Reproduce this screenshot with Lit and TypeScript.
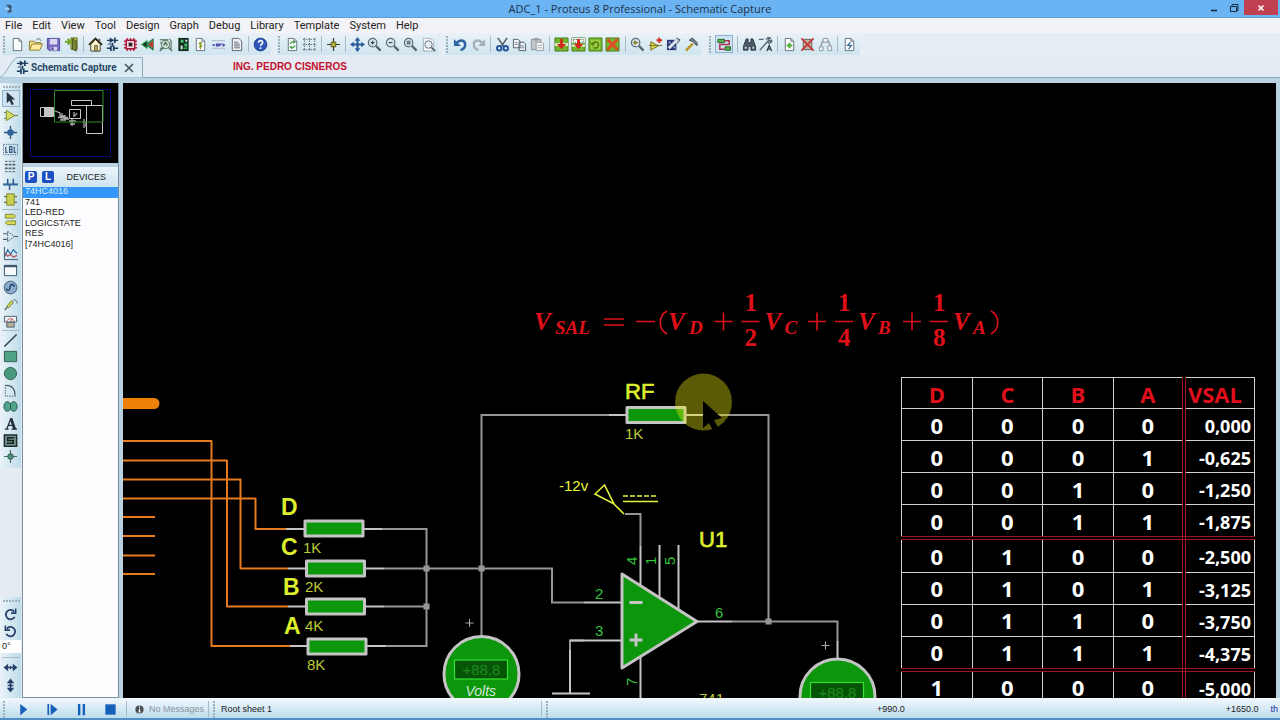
import { LitElement, html, svg, css, nothing } from "lit";
import { customElement } from "lit/decorators.js";

const page = svg`<path d="M3.5 1.5h6l3 3v10h-9z" fill="#fbfcfd" stroke="#66717c"/><path d="M9.5 1.5v3h3" fill="none" stroke="#66717c"/>`;
const lens = svg`<path d="M9.5 9.5l5 5" stroke="#59646e" stroke-width="2.4"/><circle cx="6" cy="6" r="4.5" fill="#dbe7ef" stroke="#5b6b78" stroke-width="1.3"/>`;
const caps = svg`<path d="M2 3.500h4M9 3.500h5M2 12h4M9 12h5M8 6v4" stroke="#1d3f60" stroke-width="1.400"/><path d="M5 .5v6l5-3z" fill="#1d3f60"/><path d="M10.500 .5v6M6.300 9v6M9.300 9v6" stroke="#1d3f60" stroke-width="1.800"/><path d="M3 7.500h6" stroke="#1d3f60"/>`;
const tile = svg`<path d="M1 1h14v14H1z" fill="#72b52c" stroke="#4d7d22"/>`;

const icons: Record<string, unknown> = {
  new: page,
  open: svg`<path d="M1.500 14V4.500h5l1 1.500h6v2" fill="#f2df8c" stroke="#8b7a2c"/><path d="M1.500 14l3-6.500h11l-3 6.500z" fill="#ffec9e" stroke="#8b7a2c"/><path d="M9 3c2-2 4-1 5 1" fill="none" stroke="#555"/>`,
  save: svg`<path d="M1.500 1.500h13v13h-11l-2-2z" fill="#7767c4" stroke="#5145a0"/><path d="M4 2h8v6H4z" fill="#d8d8f0"/><path d="M5 10.500h7v4H5z" fill="#cfd2e2"/><path d="M6 11h2v3H6z" fill="#40379a"/>`,
  exit: svg`<path d="M7.500 1h6.500v12H7.500z" fill="#cfd84d" stroke="#59601d"/><path d="M9 2l4 2v11l-4-2z" fill="#7b8838" stroke="#474d1a"/><path d="M1 5h6M4 2l3 3-3 3" fill="none" stroke="#6fa822" stroke-width="2.200"/>`,
  home: svg`<path d="M3 8v7h10V8L8 2.500z" fill="#fff6cf" stroke="#3c3a22"/><path d="M1 8.500L8 1.500l7 7" fill="none" stroke="#2e2a12" stroke-width="1.800"/><path d="M7 9h3v6H7z" fill="#c9b440" stroke="#555"/><path d="M12 2v3" stroke="#555" stroke-width="2"/>`,
  caps,
  chip: svg`<path d="M4.500 1v14M8 1v14M11.500 1v14M1 4.500h14M1 8h14M1 11.500h14" stroke="#c02040" stroke-width="1.500"/><path d="M3.500 3.500h9v9h-9z" fill="#f3d7dc" stroke="#a31234" stroke-width="1.500"/><path d="M6 6h4v4H6z" fill="#39202a"/>`,
  view3d: svg`<path d="M8 3v10L1 8z" fill="#2b9a4e"/><path d="M14 2v12L6 8z" fill="#2f9a58" stroke="#1c6b3a"/><path d="M14 4v8L9 8z" fill="#c8372e"/><path d="M3 8l4-3v6z" fill="#14301f"/>`,
  gerber: svg`<path d="M2 3h9M2 6h5M2 12h5M12 2l2 2v9" fill="none" stroke="#6f8b7a" stroke-width="1.500"/><circle cx="8" cy="8" r="4.500" fill="#c8dcd0" stroke="#54705f"/><path d="M6 9l2-3 2 3M11 11l4 4M2 15l4-4" fill="none" stroke="#54705f" stroke-width="1.600"/>`,
  design: svg`<path d="M2.500 1h11v14h-11z" fill="#152b1d"/><path d="M5 3h3v3H5zM9 7h3v3H9z" fill="#39c46d"/><path d="M5 9h2v4H5zM10 3h2v2h-2z" fill="#d8f4e0"/><path d="M8 11h4v2H8z" fill="#2a9c53"/>`,
  bom: svg`${page}<path d="M10 6.500c-3-1.500-4.500 1-2 1.800s2 3-1.800 2M8 5v8" fill="none" stroke="#8b9b2b" stroke-width="1.200"/>`,
  source: svg`<path d="M1 4h14M1 12h14" stroke="#a9b0c6" /><path d="M1.500 8.500h3M6 7.500v2h2v-2zM9.500 9.500v-2h2M13 7v3M12.500 8.500h2.500" fill="none" stroke="#4d44b0" stroke-width="1.400"/>`,
  notes: svg`<path d="M3.500 1.500h7l3 3v10h-10z" fill="#eef0f3" stroke="#58636e"/><path d="M5.500 5.500h4M5.500 7.500h6M5.500 9.500h6M5.500 11.500h6" stroke="#5d6872"/>`,
  help: svg`<circle cx="8" cy="8" r="6.800" fill="#2f55b8" stroke="#1e3d8e"/><path d="M5.800 6.200C5.800 3 10.500 3.300 10.300 6 10.200 7.500 8 7.700 8 9.500M8 11v1.700" fill="none" stroke="#fff" stroke-width="1.700"/>`,
  redraw: svg`${page}<path d="M5.500 7.500A2.800 2.800 0 0 1 10 6M10.500 9A2.800 2.800 0 0 1 6 10.800" fill="none" stroke="#44a344" stroke-width="1.500"/><path d="M9 3.500l2.500 2.500-3 1zM7 13l-2.500-2.500 3-1z" fill="#44a344"/>`,
  grid: svg`<path d="M2.500 1v14M8 1v14M13.500 1v14M1 2.500h14M1 8h14M1 13.500h14" stroke="#4f5b68" stroke-dasharray="1.500 1.200"/>`,
  origin: svg`<path d="M8 1v14M1 8h14" stroke="#3b3b26" stroke-width="1.300"/><path d="M5.500 5.500h5v5h-5z" fill="#b8b23c" stroke="#5d5a20"/>`,
  pan: svg`<path d="M8 2v12M2 8h12" stroke="#2a5b9b" stroke-width="2.200"/><path d="M8 0l3 4H5zM8 16l3-4H5zM0 8l4-3v6zM16 8l-4-3v6z" fill="#2a5b9b"/>`,
  zin: svg`${lens}<path d="M4 6h4M6 4v4" stroke="#33414d" stroke-width="1.200"/>`,
  zout: svg`${lens}<path d="M4 6h4" stroke="#33414d" stroke-width="1.200"/>`,
  zall: svg`${lens}<path d="M4.500 4.500h3v3h-3z" fill="#8895a0" stroke="#51606c"/>`,
  zarea: svg`<path d="M2.500 15V1.500h8l3 3V15z" fill="#f4f6f8" stroke="#7b8792" stroke-dasharray="1.500 1"/><circle cx="8" cy="8" r="4" fill="#e4ecf1" stroke="#66737e"/><path d="M11 11l4 4" stroke="#59646e" stroke-width="2"/>`,
  undo: svg`<path d="M4 6c5-4 9-2 9 2 0 3-2 5-5 6" fill="none" stroke="#2f62a3" stroke-width="2.600"/><path d="M1 2v7.500h7.500z" fill="#2f62a3"/>`,
  redo: svg`<path d="M12 6C7 2 3 4 3 8c0 3 2 5 5 6" fill="none" stroke="#a7b0b8" stroke-width="2.600"/><path d="M15 2v7.500H7.500z" fill="#a7b0b8"/>`,
  cut: svg`<path d="M3 1l7 10M13 1L6 11" stroke="#4c5a66" stroke-width="1.600"/><circle cx="4.500" cy="12" r="2.400" fill="none" stroke="#24549b" stroke-width="2"/><circle cx="11.500" cy="12" r="2.400" fill="none" stroke="#24549b" stroke-width="2"/>`,
  copy: svg`<path d="M1.500 2.500h5l2 2v7h-7zM7.500 5.500h5l2 2v7h-7z" fill="#f1f3f6" stroke="#4f5a66"/><path d="M3 6h3M3 8h3M9 9.500h4M9 11.500h4" stroke="#76828d"/>`,
  paste: svg`<path d="M1.500 2.500h10v11h-10z" fill="#c3c8cc" stroke="#8b9298"/><path d="M4.500 1h4v3h-4z" fill="#969da3"/><path d="M6.500 5.500h6l2 2v7h-8z" fill="#f0f2f4" stroke="#949ba2"/><path d="M8 9h5M8 11.500h5" stroke="#aab0b6"/>`,
  bcopy: svg`${tile}<path d="M1 6.500h14v3H1z" fill="#dff0d2"/><path d="M6.500 2h3v5.500h3.500L8 13 3 7.500h3.500z" fill="#d42a1d"/>`,
  bmove: svg`${tile}<path d="M1 1h14v5.500H1zM1 8h14v2H1z" fill="#eef5ea"/><path d="M2.500 2.500h11v3.500h-11z" fill="none" stroke="#66717c" stroke-dasharray="1.500 1"/><path d="M6.500 2h3v5.500h3.500L8 13 3 7.500h3.500z" fill="#d42a1d"/>`,
  brot: svg`${tile}<path d="M3 3h10v10H3z" fill="#97cf3d"/><path d="M5 7.500A3.200 3.200 0 1 1 6 11" fill="none" stroke="#577b18" stroke-width="1.700"/><path d="M2.500 6h5L5 10z" fill="#577b18"/>`,
  bdel: svg`${tile}<path d="M2.500 2.500l11 11M13.500 2.500l-11 11" stroke="#df4a28" stroke-width="3"/>`,
  pick: svg`${lens}<path d="M3 6h2M7 6h2M5 4v4l2.500-2z" fill="#b9bd3c" stroke="#6e7020"/>`,
  make: svg`<path d="M1 9h14M3 5v9l8-4.500z" fill="#ddd84b" stroke="#736f1e"/><path d="M12 .5v6M9 3.500h6" stroke="#d6301f" stroke-width="2"/>`,
  pack: svg`<path d="M1 3h10v11H1z" fill="#2d3c77"/><path d="M3 12l9-9" stroke="#dfe5ef" stroke-width="3"/><path d="M3 5l2 2M8 10l2 2" stroke="#8fa0cf" stroke-width="1.600"/><path d="M11 1l4 2-3 4" fill="#b9c2cc" stroke="#48505c"/>`,
  hammer: svg`<path d="M2 14.500L9.500 7" stroke="#b89428" stroke-width="2.600"/><path d="M5.500 3.500L9 1l5 5v3l-2-1-2-3z" fill="#77828f" stroke="#414b57"/>`,
  wire: svg`<path d="M1 2.500h7v3.500H1zM8.500 10.500h6v3.500h-6z" fill="#55b154" stroke="#236127"/><path d="M8 4h5v4H3v5h5" fill="none" stroke="#a8334c" stroke-width="1.600"/>`,
  find: svg`<path d="M4.500 2h2v4h3V2h2l3 8v4h-5v-4h-3v4h-5v-4z" fill="#4d5a67" stroke="#2f3a46"/><path d="M3 10.500h2v2H3zM11 10.500h2v2h-2z" fill="#c6d0d8"/>`,
  prop: svg`<path d="M1 2.500h5M2 14l9-10M9 3c0-2 3-3 4-2l-2 2 1 1.500 2.500-1C15 6 12 7 10.500 6" fill="none" stroke="#596572" stroke-width="1.500"/><path d="M9.500 15l2.500-6 2.500 6M10.500 13h3" fill="none" stroke="#2e3944" stroke-width="1.300"/>`,
  addsheet: svg`${page}<path d="M8 6v6M5 9h6" stroke="#4fae32" stroke-width="2"/>`,
  delsheet: svg`<path d="M3.500 2.500h9v11h-9z" fill="#bfae9f" stroke="#665e58"/><path d="M1.500 1.500l13 13M14.500 1.500l-13 13" stroke="#c73433" stroke-width="1.700"/>`,
  tree: svg`<path d="M5.500 1.500h5v4h-5zM1.500 10.500h4v4h-4zM10.500 9.500h4v5h-4z" fill="#eef1f4" stroke="#8d969f"/><path d="M5 4L3 10M11 4l2 5" stroke="#8d969f" stroke-width="1.400"/>`,
  erc: svg`${page}<path d="M9 5.500L6 9h4l-3 4" fill="none" stroke="#34658e" stroke-width="1.300"/>`,

  select: svg`<path d="M4 1v12l3-3 2 5 2.500-1-2.300-5H13z" fill="#26323f"/>`,
  comp: svg`<path d="M1 5h3M1 11h3M12 8h4" stroke="#66702a"/><path d="M3.500 2.500v11l9-5.500z" fill="#d4dc62" stroke="#7c8735"/>`,
  junction: svg`<path d="M8 1v14M1 8h14" stroke="#33547a" stroke-width="1.400"/><circle cx="8" cy="8" r="3.500" fill="#2f63a0"/>`,
  label: svg`<path d="M.5 2.500h15v11H.5z" fill="none" stroke="#4f6b8f" stroke-dasharray="1.500 1"/><path d="M3 5v6h2M7 5v6h2.500V5zM7 8h2M12 5v6h2" fill="none" stroke="#3c5b86" stroke-width="1.300"/>`,
  script: svg`<path d="M2 2.500h12M2 13.500h12" stroke="#55636f" stroke-dasharray="3 1"/><path d="M2 6h12M2 10h12" stroke="#55636f" stroke-width="2" stroke-dasharray="3 1"/>`,
  bus: svg`<path d="M0 9h16" stroke="#2e6aa8" stroke-width="2.200"/><path d="M5 3v6M11 3v6M7 9v6" stroke="#2e5986" stroke-width="1.600"/>`,
  sub: svg`<path d="M1 5h14M1 11h14" stroke="#6b7340" stroke-width="1.300"/><path d="M4 2h8v12H4z" fill="#c9d051" stroke="#7b8331"/>`,
  term: svg`<path d="M2.500 2.500h9l2 2-2 2h-9zM4.500 9.500h9v4h-9l-2-2z" fill="#d6da55" stroke="#7c8334"/>`,
  pin: svg`<path d="M0 5h5M0 11h5M12 8h4" stroke="#51606f" stroke-width="1.200"/><path d="M5 2.500v11l7-5.500z" fill="none" stroke="#51606f" stroke-dasharray="2 1"/>`,
  graph: svg`<path d="M1.500 1v13.500H16" fill="none" stroke="#33526f"/><path d="M2 11l3-7 3 5 3-5 4 4" fill="none" stroke="#2e73a5" stroke-width="1.300"/><path d="M2 7l3 4 3-2 3 3 4-2" fill="none" stroke="#b94e55" stroke-width="1.200"/>`,
  popup: svg`<path d="M1.500 2.500h13v11h-13z" fill="#f4f9fc" stroke="#35506c"/><path d="M1 3.500h14" stroke="#35506c" stroke-width="2"/>`,
  gen: svg`<circle cx="8" cy="8" r="6.800" fill="#8ba9c9" stroke="#42607f"/><path d="M3.500 9c1 3 3.500 3 4-1s3-4 5-1" fill="none" stroke="#20416b" stroke-width="1.500"/>`,
  probe: svg`<path d="M2 14l3-4" stroke="#4f5a5a" stroke-width="1.300"/><path d="M4 10l5-6 2 2-5 5.500z" fill="#d8de5a" stroke="#6f7733"/><path d="M10 5c3-5 5 0 5 2" fill="none" stroke="#61705a"/>`,
  meter: svg`<path d="M1.500 2.500h13v6h-13z" fill="#eef3f6" stroke="#47596a"/><path d="M4 8c1-4 7-4 8 0M8 8l2-3" fill="none" stroke="#b04b4b"/><path d="M4 9h8v5H4z" fill="#aeb193" stroke="#566370"/>`,
  line: svg`<path d="M1.500 14.500l13-13" stroke="#33404d" stroke-width="1.600"/>`,
  box: svg`<path d="M1.500 2.500h13v11h-13z" fill="#4fa388" stroke="#2e5b50"/>`,
  circle: svg`<circle cx="8" cy="8" r="6.500" fill="#4a9a80" stroke="#2e5b50"/>`,
  arc: svg`<path d="M2.500 2v12h11" fill="none" stroke="#3f5962" stroke-dasharray="1.500 1.200"/><path d="M3 2.500c7 0 10 4 10 11" fill="none" stroke="#3f5962" stroke-width="1.200"/>`,
  path: svg`<path d="M8 5C5 1 1 3 1 8s4 7 7 3c3 4 7 2 7-3s-4-7-7-3z" fill="#4fa388" stroke="#26574b"/><path d="M8 5v6" stroke="#26574b"/>`,
  text: svg`<path d="M2 14h4M9 14h6M4 14L8.500 2.500M5.500 10h5" stroke="#222d38" stroke-width="1.400"/><path d="M8.500 2.500l4 11.500" stroke="#222d38" stroke-width="3"/>`,
  symbol: svg`<path d="M1.500 2h13v12h-13z" fill="#76968f" stroke="#1f2c2e" stroke-width="1.600"/><path d="M12 5H5v3h6v3H4" fill="none" stroke="#15201f" stroke-width="1.700"/>`,
  marker: svg`<path d="M8 1v14M1 8h14" stroke="#45706a" stroke-width="1.200"/><circle cx="8" cy="8" r="3" fill="#4d8f7e" stroke="#31564e"/>`,
  cw: svg`<path d="M12.500 10.500A5 5 0 1 1 12 5" fill="none" stroke="#28416a" stroke-width="1.900"/><path d="M13.500 1.500v5h-5" fill="none" stroke="#28416a" stroke-width="1.700"/>`,
  ccw: svg`<path d="M3.500 10.500A5 5 0 1 0 4 5" fill="none" stroke="#28416a" stroke-width="1.900"/><path d="M2.500 1.500v5h5" fill="none" stroke="#28416a" stroke-width="1.700"/>`,
  fliph: svg`<path d="M3 8h10" stroke="#28416a" stroke-width="1.700"/><path d="M.5 8l5-4v8zM15.500 8l-5-4v8z" fill="#28416a"/><path d="M8 6v4" stroke="#28416a"/>`,
  flipv: svg`<path d="M8 3v10M5 8h6" stroke="#28416a" stroke-width="1.700"/><path d="M8 .5l4 5H4zM8 15.500l4-5H4z" fill="#28416a"/>`,
  play: svg`<path d="M4.500 2v12l7.500-6z" fill="#1560b8"/>`,
  step: svg`<path d="M3.500 2v12" stroke="#1560b8" stroke-width="1.800"/><path d="M6 2v12l7.500-6z" fill="#1560b8"/>`,
  pause: svg`<path d="M5.500 2v12M10.500 2v12" stroke="#1560b8" stroke-width="2.600"/>`,
  stop: svg`<path d="M2.500 2.500h11v11h-11z" fill="#1560b8"/>`,
  info: svg`<circle cx="8" cy="8" r="6" fill="#4b4f53"/><path d="M8 7v4.500M6.500 11.500h3M8 3.800v1.800" stroke="#fff" stroke-width="1.700"/>`,
};

const glyph = (name: string) =>
  html`<svg class="ic" viewBox="0 0 16 16" aria-hidden="true">${icons[name]}</svg>`;

const tool = (name: string, on = false) =>
  html`<button class="tool ${on ? "on" : ""}" aria-label=${name}>${glyph(name)}</button>`;

type Group = { names: string[]; size: number };

const topBars: Group[][] = [
  [
    { names: ["new", "open", "save", "exit"], size: 70 },
    { names: ["home", "caps", "chip", "view3d", "gerber", "design", "bom", "source", "notes"], size: 157 },
    { names: ["help"], size: 16 },
  ],
  [
    { names: ["redraw", "grid"], size: 33 },
    { names: ["origin"], size: 16 },
    { names: ["pan", "zin", "zout", "zall", "zarea"], size: 87 },
  ],
  [
    { names: ["undo", "redo"], size: 34 },
    { names: ["cut", "copy", "paste"], size: 51 },
    { names: ["bcopy", "bmove", "brot", "bdel"], size: 68 },
    { names: ["pick", "make", "pack", "hammer"], size: 70 },
  ],
  [
    { names: ["wire"], size: 18 },
    { names: ["find", "prop"], size: 32 },
    { names: ["addsheet", "delsheet", "tree"], size: 52 },
    { names: ["erc"], size: 16 },
  ],
];

const sideGroups: Group[] = [
  { names: ["select", "comp", "junction", "label", "script", "bus", "sub"], size: 118 },
  { names: ["term", "pin", "graph", "popup", "gen", "probe", "meter"], size: 118 },
  { names: ["line", "box", "circle", "arc", "path", "text", "symbol", "marker"], size: 133 },
];

const menus = ["File", "Edit", "View", "Tool", "Design", "Graph", "Debug", "Library", "Template", "System", "Help"];
const devices = ["74HC4016", "741", "LED-RED", "LOGICSTATE", "RES", "[74HC4016]"];
const outputs = ["0,000", "-0,625", "-1,250", "-1,875", "-2,500", "-3,125", "-3,750", "-4,375", "-5,000"];

@customElement("schematic-canvas")
class SchematicCanvas extends LitElement {
  static styles = css`
    :host { display: block; position: relative; overflow: hidden; background: #000; }
    .sheet { display: block; position: absolute; inset: 0; width: 100%; height: 100%; font-family: "Liberation Sans", sans-serif; }
    .wire { fill: none; stroke: #969696; stroke-width: 2; }
    .lead { fill: none; stroke: #c4c4c4; stroke-width: 2; }
    .bus { fill: none; stroke: #e67a1c; stroke-width: 2; stroke-linejoin: round; }
    .body { fill: #0b960b; stroke: #c4c4c4; stroke-width: 3; stroke-linejoin: round; }
    .dot { fill: #969696; }
    .ref { fill: #dcee2c; font-size: 22px; stroke: #dcee2c; stroke-width: 0.7px; }
    .name { fill: #dcee2c; font-size: 23px; font-weight: 700; }
    .val { fill: #bccb36; font-size: 15px; }
    .net { fill: #e6f53c; font-size: 15px; }
    .pin { fill: #33c33c; font-size: 15px; }
    .yl { fill: none; stroke: #e6f53c; stroke-width: 1.6; }
    .plus { stroke: #aaa; stroke-width: 1; }
    .lcd { fill: #065506; stroke: #35e035; stroke-width: 1.2; }
    .seg { fill: #1f8c1f; font-size: 15px; }
    .unit { fill: #d5e6d5; font-size: 14px; font-style: italic; }
    .math { fill: #e0101a; font-family: "Liberation Serif", serif; font-size: 25px; font-weight: 700; }
    .v { font-style: italic; }
    .sub { font-style: italic; font-size: 19px; }
    .op { fill: none; stroke: #e0101a; stroke-width: 1.6; }
    .truth { position: absolute; left: 778px; top: 294px; width: 354px; height: 327px; border-collapse: collapse; table-layout: fixed; font: 700 22px/26px "Open Sans", "Noto Sans", sans-serif; color: #fff; }
    .truth th, .truth td { padding: 0; border: 1px solid #d0d0d0; text-align: center; font-weight: 700; }
    .truth th { height: 31px; padding-top: 2px; box-sizing: border-box; color: #e00f1c; }
    .truth .in { border-right: 4px double #a01420; }
    .truth .split td { border-bottom: 4px double #a01420; }
    .truth .out { font-size: 18px; text-align: right; padding: 3px 3px 0 0; }
    .truth .vs { text-align: left; padding-left: 2px; }
  `;

  private resistor(x: number, y: number) {
    return svg`<rect class="body" x=${x} y=${y - 7} width="58" height="15"/>`;
  }

  private meter(x: number, y: number) {
    return svg`<circle class="body" cx=${x} cy=${y} r="37.500"/>
      <rect class="lcd" x=${x - 27} y=${y - 14} width="53" height="19"/>
      <text class="seg" x=${x - 19} y=${y + 1}>+88.8</text>
      <text class="unit" x=${x - 16} y=${y + 22}>Volts</text>
      <path class="plus" d="M${x - 16} ${y - 51}h8M${x - 12} ${y - 55}v8"/>`;
  }

  private term(x: number, den: string, letter: string) {
    return svg`<path class="op" d="M${x - 27} 321.500h18M${x - 18} 312.500v18M${x} 321.500h18"/>
      <text x=${x + 3} y="311">1</text><text x=${x + 3} y="346">${den}</text>
      <text class="v" x=${x + 23} y="330">V</text><text class="sub" x=${x + 43} y="334">${letter}</text>`;
  }

  render() {
    return html`
      <svg class="sheet" role="img" aria-label="Schematic">
        <g transform="translate(-123 -83)">
          <path d="M120 403.500h34" stroke="#f0800a" stroke-width="11" stroke-linecap="round"/>
          <path class="bus" d="M123 441h88.500v205H290M123 460.500h104V606.500H288M123 479.500h117.500V568.500H288M123 498.500h132.500V529H286M123 517h32M123 536h32M123 555.500h32M123 574h32"/>
          <path class="lead" d="M286 529h96M288 568.500h96M288 606.500h96M290 646h96M609 415h95"/>
          <path class="wire" d="M382 529h44.500v117H386M384 568.500H552v34h32M384 606.500H426.500M481.500 568.500V415H609M704 415h64.500v206.500M732 621.500h105.500v20M625 514h15.500v32"/>
          <path class="wire" d="M481.500 568.500V637M570 693v-52.500h14"/>
          <path class="lead" d="M584 602.500h38M570 640.500h52M552 693.500h38M640.500 546v40M659.500 545v55M678.500 545v65M696 621.500h36M640.500 655v45M837.500 641v18M570 650v43"/>
          ${this.resistor(305, 528)}${this.resistor(306.5, 568)}${this.resistor(306.5, 606)}${this.resistor(308, 646)}${this.resistor(627, 414.5)}
          <path class="dot" d="M423.500 565.500h6v6h-6zM423.500 603.500h6v6h-6zM478.500 565.500h6v6h-6zM765.500 618.500h6v6h-6z"/>
          <path class="body" d="M622 574v94l75-46.500z"/>
          <path d="M629.500 602.500h13M629.500 640h13M636 633.500v13" stroke="#c4c4c4" stroke-width="3"/>
          ${this.meter(481.5, 674)}${this.meter(837.5, 696.5)}
          <text class="name" x="281" y="515">D</text><text class="name" x="281" y="555">C</text>
          <text class="name" x="283" y="595">B</text><text class="name" x="284" y="634">A</text>
          <text class="val" x="303" y="553">1K</text><text class="val" x="305" y="592">2K</text>
          <text class="val" x="305" y="631">4K</text><text class="val" x="307" y="670">8K</text>
          <text class="ref" x="625" y="399">RF</text><text class="val" x="625" y="439">1K</text>
          <text class="ref" x="699" y="547">U1</text><text class="val" x="699" y="704">741</text>
          <text class="net" x="559" y="491">-12v</text>
          <path class="yl" d="M595 494l9.500-9 9.500 19zM614 504l10 10M623 501.500h35"/>
          <path class="yl" d="M623 496h35" stroke-dasharray="5 2"/>
          <text class="pin" x="595" y="599">2</text><text class="pin" x="595" y="636">3</text><text class="pin" x="715" y="618">6</text>
          <text class="pin" transform="translate(637 565) rotate(-90)">4</text>
          <text class="pin" transform="translate(656 565) rotate(-90)">1</text>
          <text class="pin" transform="translate(675 565) rotate(-90)">5</text>
          <text class="pin" transform="translate(637 686) rotate(-90)">7</text>
          <g class="math">
            <text class="v" x="534" y="330">V</text><text class="sub" x="555" y="334">SAL</text>
            <path class="op" d="M604 319h20M604 325h20M636 321.500h19"/>
            <path class="op" d="M667 311c-9 5-9 18 0 23M991 311c9 5 9 18 0 23"/>
            <text class="v" x="668" y="330">V</text><text class="sub" x="689" y="334">D</text>
            ${this.term(741.5, "2", "C")}${this.term(835, "4", "B")}${this.term(930, "8", "A")}
          </g>
          <circle cx="703.500" cy="402" r="28.500" fill="#ecec12" fill-opacity="0.38"/>
          <path d="M703 401v27l6-5 4 8 6-2-5-9 8-2z" fill="#000"/>
        </g>
      </svg>
      <table class="truth">
        <thead><tr><th>D</th><th>C</th><th>B</th><th class="in">A</th><th class="vs">VSAL</th></tr></thead>
        <tbody>
          ${outputs.map((out, n) => html`<tr class=${n % 4 === 3 ? "split" : ""}>
            ${[3, 2, 1, 0].map((bit) => html`<td class=${bit === 0 ? "in" : ""}>${(n >> bit) & 1}</td>`)}
            <td class="out">${out}</td>
          </tr>`)}
        </tbody>
      </table>`;
  }
}

@customElement("app-root")
class AppRoot extends LitElement {
  static styles = css`
    :host { display: flex; flex-direction: column; height: 100vh; min-height: 480px; overflow: hidden; background: #e7edf4; color: #222; font: 11px/14px "Open Sans", "Noto Sans", sans-serif; }
    * { box-sizing: border-box; }
    button, input { font: inherit; color: inherit; border: 0; margin: 0; padding: 0; background: none; }
    .title { display: grid; grid-template-columns: 1fr auto 1fr; height: 18px; background: #6bb4f3; border-bottom: 1px solid #5b9fd8; }
    .title h1 { margin: 0; font-size: 11px; line-height: 18px; font-weight: 400; color: #1d3247; }
    .logo { width: 10px; height: 10px; margin: 4px 0 0 4px; }
    .win { display: flex; justify-content: flex-end; height: 15px; padding-right: 2px; }
    .win button { width: 20px; height: 15px; display: grid; place-items: center; }
    .win .close { width: 34px; height: 15px; background: #bf4150; }
    .win svg { width: 10px; height: 10px; }
    .menu { display: flex; height: 15px; padding: 1px 0 0 5px; gap: 10px; background: #f3f3f7; font-family: Roboto, "Open Sans", sans-serif; }
    .bars { display: flex; gap: 6px; height: 22px; padding: 0 2px; }
    .bar { display: flex; align-items: center; padding-right: 3px; background: linear-gradient(#e9f2f8, #cfe5ef); }
    .grip { width: 7px; height: 18px; background: radial-gradient(circle at 2px 2px, #9fb0bd 1px, transparent 1px) 0 0 / 7px 3px; }
    .group { display: flex; justify-content: space-between; }
    .sep { width: 8px; height: 16px; background: linear-gradient(#a9bbc7, #a9bbc7) center / 1px 100% no-repeat; }
    .tool { display: grid; place-items: center; width: 16px; height: 16px; }
    .tool.on { width: 18px; height: 18px; background: #cfe3f2; outline: 1px solid #8fb2cf; outline-offset: -1px; }
    .ic { display: block; width: 15px; height: 15px; }
    .tabs { display: flex; align-items: flex-end; height: 23px; border-bottom: 1px solid #8aabbe; background: #e5ebf2; }
    .tab { position: relative; display: flex; align-items: center; width: 143px; height: 21px; padding-left: 15px; gap: 1px; font: 700 10px/14px Roboto, "Liberation Sans", sans-serif; color: #2b4765; margin-bottom: -1px; }
    .shape { position: absolute; inset: 0; width: 100%; height: 100%; }
    .tab .ic, .tab span, .tab button { position: relative; }
    .tab button { width: 12px; height: 12px; margin: 0 8px 0 auto; }
    .tab button svg { display: block; width: 12px; height: 12px; }
    .author { margin-left: 90px; font: 700 10px/20px "Liberation Sans", sans-serif; color: #c3102c; }
    .main { flex: 1; min-height: 0; display: grid; grid-template-columns: 22px 97px 1fr; padding: 5px 4px 0 0; background: #b9d3e2; }
    .side { display: flex; flex-direction: column; justify-content: space-between; background: #e4ebf3; }
    .vbar { display: flex; flex-direction: column; align-items: center; width: 21px; padding: 2px 0 3px; background: linear-gradient(90deg, #e9f3f8, #bfdcea); }
    .hgrip { width: 18px; height: 5px; background: radial-gradient(circle at 2px 2px, #9fb0bd 1px, transparent 1px) 0 0 / 3px 5px; }
    .vgroup { display: flex; flex-direction: column; justify-content: space-between; align-items: center; }
    .vsep { width: 18px; height: 1px; margin: 1px 0; background: #a9bbc7; }
    .vbar .tool.on { height: 17px; }
    .rotate { padding-bottom: 5px; }
    .rotate .hgrip { margin-bottom: 2px; }
    .angle { width: 21px; height: 13px; margin: 1px 0 3px; padding-left: 2px; background: #fff; font: 9px/13px "Liberation Sans", sans-serif; }
    .panel { display: flex; flex-direction: column; border: 1px solid #7c8f9d; border-width: 0 1px 1px; background: #fdfdff; }
    .over { display: block; width: 100%; height: 80px; background: #000; flex: none; }
    .head { display: flex; align-items: center; height: 24px; padding: 0 12px 0 2px; gap: 5px; border-top: 4px solid #b9d3e2; background: linear-gradient(#edf6fb, #cfe4ef); font: 9px/14px "Liberation Sans", sans-serif; }
    .head button { width: 12px; height: 12px; border-radius: 2px; background: #1c4fc4; color: #fff; font: 700 10px/12px "Liberation Sans", sans-serif; }
    .head span { margin-left: auto; }
    .list { display: grid; grid-auto-rows: 1fr; height: 63px; margin: 0; padding: 0; list-style: none; font: 9px/9px "Liberation Sans", sans-serif; }
    .list li { padding-left: 2px; }
    .list .sel { background: #3397fb; color: #d8ecff; }
    schematic-canvas { margin-left: 4px; }
    .status { display: flex; align-items: center; height: 22px; flex: none; padding: 2px 2px 0; background: linear-gradient(#f2f8fc, #bddcee); border-bottom: 2px solid #4e8fc4; font: 9px/14px "Liberation Sans", sans-serif; white-space: nowrap; }
    .play { display: flex; gap: 13px; margin-left: 6px; margin-right: 4px; }
    .msg { display: flex; align-items: center; gap: 4px; width: 74px; padding-left: 4px; color: #8b959d; }
    .sheetname { width: 316px; margin-left: 2px; }
    .coords { flex: 1; display: flex; justify-content: flex-end; gap: 12px; }
    .coords .x { margin-right: auto; margin-left: 325px; }
    .unit { color: #2530a8; }
  `;

  private row(groups: Group[]) {
    return html`<div class="bar" role="toolbar"><div class="grip"></div>
      ${groups.map((g, i) => html`${i ? html`<div class="sep"></div>` : nothing}
        <div class="group" style="width:${g.size}px">${g.names.map((n) => tool(n, n === "wire"))}</div>`)}
    </div>`;
  }

  render() {
    return html`
      <header class="title">
        <svg class="logo" viewBox="0 0 10 10"><path d="M2 1c5-1 7 1 5 4 2 3-1 5-4 3l3-3z" fill="#3d5874"/><path d="M1 5h4" stroke="#d6e4f0"/></svg>
        <h1>ADC_1 - Proteus 8 Professional - Schematic Capture</h1>
        <div class="win">
          <button aria-label="Minimize"><svg viewBox="0 0 10 10"><path d="M2 7.500h6" stroke="#13273b" stroke-width="1.600"/></svg></button>
          <button aria-label="Restore"><svg viewBox="0 0 10 10"><path d="M3 2.500V1.500h6v6H8M1.500 3.500h6v5h-6z" fill="none" stroke="#13273b"/></svg></button>
          <button class="close" aria-label="Close"><svg viewBox="0 0 10 10"><path d="M2.500 2.500l5 5M7.500 2.500l-5 5" stroke="#fff" stroke-width="1.500"/></svg></button>
        </div>
      </header>
      <nav class="menu">${menus.map((m) => html`<button>${m}</button>`)}</nav>
      <div class="bars">${topBars.map((b) => this.row(b))}</div>
      <div class="tabs">
        <div class="tab">
          <svg class="shape" viewBox="0 0 143 21" preserveAspectRatio="none"><path d="M0 20.500C7 17 9 6 17 .5h125.500v20" fill="#dcecf5" stroke="#8aabbe"/></svg>
          ${glyph("caps")}<span>Schematic Capture</span>
          <button aria-label="Close tab"><svg viewBox="0 0 12 12"><path d="M2 2l8 8M10 2l-8 8" stroke="#4c5861" stroke-width="1.700"/></svg></button>
        </div>
        <div class="author">ING. PEDRO CISNEROS</div>
      </div>
      <main class="main">
        <div class="side">
          <div class="vbar"><div class="hgrip"></div>
            ${sideGroups.map((g, i) => html`${i ? html`<div class="vsep"></div>` : nothing}
              <div class="vgroup" style="height:${g.size}px">${g.names.map((n) => tool(n, n === "select"))}</div>`)}
          </div>
          <div class="vbar rotate"><div class="hgrip"></div>
            <div class="vgroup" style="height:33px">${tool("cw")}${tool("ccw")}</div>
            <input class="angle" aria-label="Rotation angle" .value=${"0°"}>
            <div class="vsep"></div>
            <div class="vgroup" style="height:34px">${tool("fliph")}${tool("flipv")}</div>
          </div>
        </div>
        <div class="panel">
          <svg class="over" viewBox="23 83 95 80" preserveAspectRatio="xMidYMid slice" aria-label="Overview">
            <path d="M30.500 89.500h80v67h-80z" fill="none" stroke="#0c0c78"/>
            <path d="M40.500 107.500h13v9h-13zM71.500 100.500h20v5h-20zM86.500 105.500h16v28h-16zM69.500 109.500h11v9h-11z" fill="none" stroke="#c8c8c8"/>
            <path d="M44 108h9v8h-9z" fill="#c4c4c4"/>
            <path d="M55 111l5 2v3h4v3h5M58 117.500h10M60 120h6M69 121h7M70 124h5M84 119v9M86 121v6M74 112v5M77 113l-2 3M62 113v7M65 115v5M72 119v7" fill="none" stroke="#aaa" stroke-width="1.300"/>
            <path d="M54.500 90.500h48.500v31.500H54.500z" fill="none" stroke="#2c8a2c"/>
          </svg>
          <div class="head"><button>P</button><button>L</button><span>DEVICES</span></div>
          <ul class="list">${devices.map((d, i) => html`<li class=${i ? "" : "sel"}>${d}</li>`)}</ul>
        </div>
        <schematic-canvas></schematic-canvas>
      </main>
      <footer class="status">
        <div class="grip"></div>
        <div class="play">${["play", "step", "pause", "stop"].map((n) => tool(n))}</div>
        <div class="sep"></div>
        <div class="msg">${glyph("info")}<span>No Messages</span></div>
        <div class="sep"></div><div class="grip"></div>
        <div class="sheetname">Root sheet 1</div>
        <div class="sep"></div><div class="grip"></div>
        <div class="coords"><span class="x">+990.0</span><span>+1650.0</span><span class="unit">th</span></div>
      </footer>`;
  }
}
